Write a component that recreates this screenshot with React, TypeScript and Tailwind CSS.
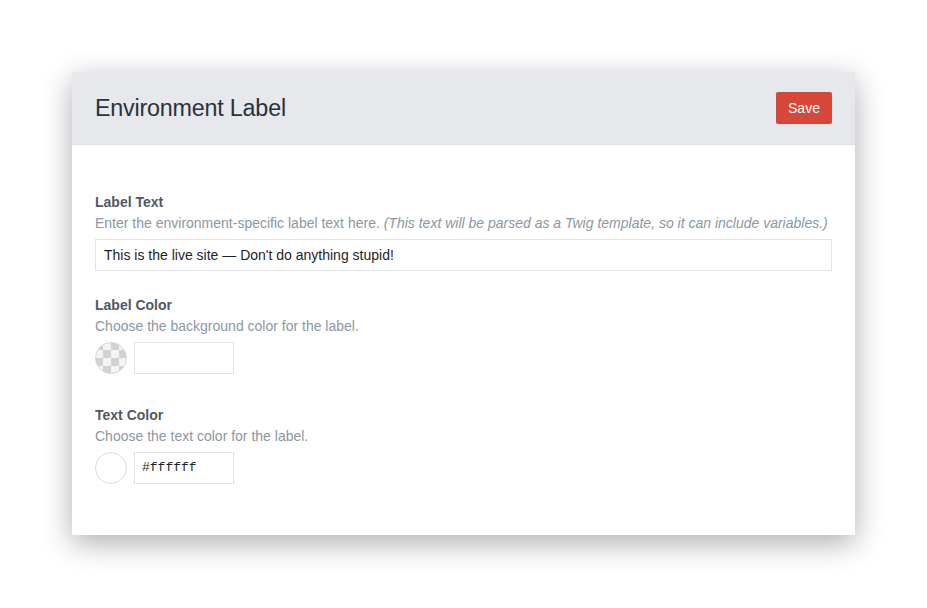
export default function App() {
  return (
    <div className="min-h-[608px] w-[927px] bg-white pl-[72px] pt-[72px] font-['Liberation_Sans',Arial,sans-serif]">
      <div className="w-[783px] bg-white shadow-[0_8px_28px_rgba(0,0,0,0.32)]">
        <div className="flex h-[73px] items-center justify-between border-b border-[#dde0e4] bg-[#e6e8eb] pl-[23px] pr-[23px]">
          <h1 className="text-[23.3px] font-normal tracking-[-0.2px] text-[#29323d]">Environment Label</h1>
          <button className="h-[32px] w-[56px] rounded-[2px] bg-[#d7473a] text-[14px] text-white">Save</button>
        </div>

        <div className="px-[23px] pb-[51px] pt-[47px]">
          <div>
            <div className="text-[14px] font-bold leading-[20px] text-[#4f5965]">Label Text</div>
            <div className="text-[14px] leading-[23px] text-[#8c97a3]">
              Enter the environment-specific label text here.{' '}
              <em>(This text will be parsed as a Twig template, so it can include variables.)</em>
            </div>
            <div className="mt-[4px] flex h-[32px] items-center border border-[#e0e2e5] px-[8px] text-[14px] text-[#1f2328]">
              This is the live site — Don't do anything stupid!
            </div>
          </div>

          <div className="mt-[24px]">
            <div className="text-[14px] font-bold leading-[20px] text-[#4f5965]">Label Color</div>
            <div className="text-[14px] leading-[23px] text-[#8c97a3]">Choose the background color for the label.</div>
            <div className="mt-[4px] flex items-center gap-[7px]">
              <svg width="32" height="32" viewBox="0 0 32 32">
                <defs>
                  <pattern id="checks" width="16" height="16" patternUnits="userSpaceOnUse" x="0" y="0">
                    <rect width="16" height="16" fill="#f4f4f4" />
                    <rect width="8" height="8" fill="#d2d2d2" />
                    <rect x="8" y="8" width="8" height="8" fill="#d2d2d2" />
                  </pattern>
                </defs>
                <circle cx="16" cy="16" r="15.5" fill="url(#checks)" stroke="#d8d8d8" />
              </svg>
              <div className="h-[32px] w-[100px] border border-[#e0e2e5]" />
            </div>
          </div>

          <div className="mt-[31px]">
            <div className="text-[14px] font-bold leading-[20px] text-[#4f5965]">Text Color</div>
            <div className="text-[14px] leading-[23px] text-[#8c97a3]">Choose the text color for the label.</div>
            <div className="mt-[4px] flex items-center gap-[7px]">
              <div className="h-[32px] w-[32px] rounded-full border border-[#dcdcdc] bg-white" />
              <div className="flex h-[32px] w-[100px] items-center border border-[#e0e2e5] px-[7px] font-['Liberation_Mono',monospace] text-[13px] text-[#1f2328]">
                #ffffff
              </div>
            </div>
          </div>
        </div>
      </div>
    </div>
  );
}
